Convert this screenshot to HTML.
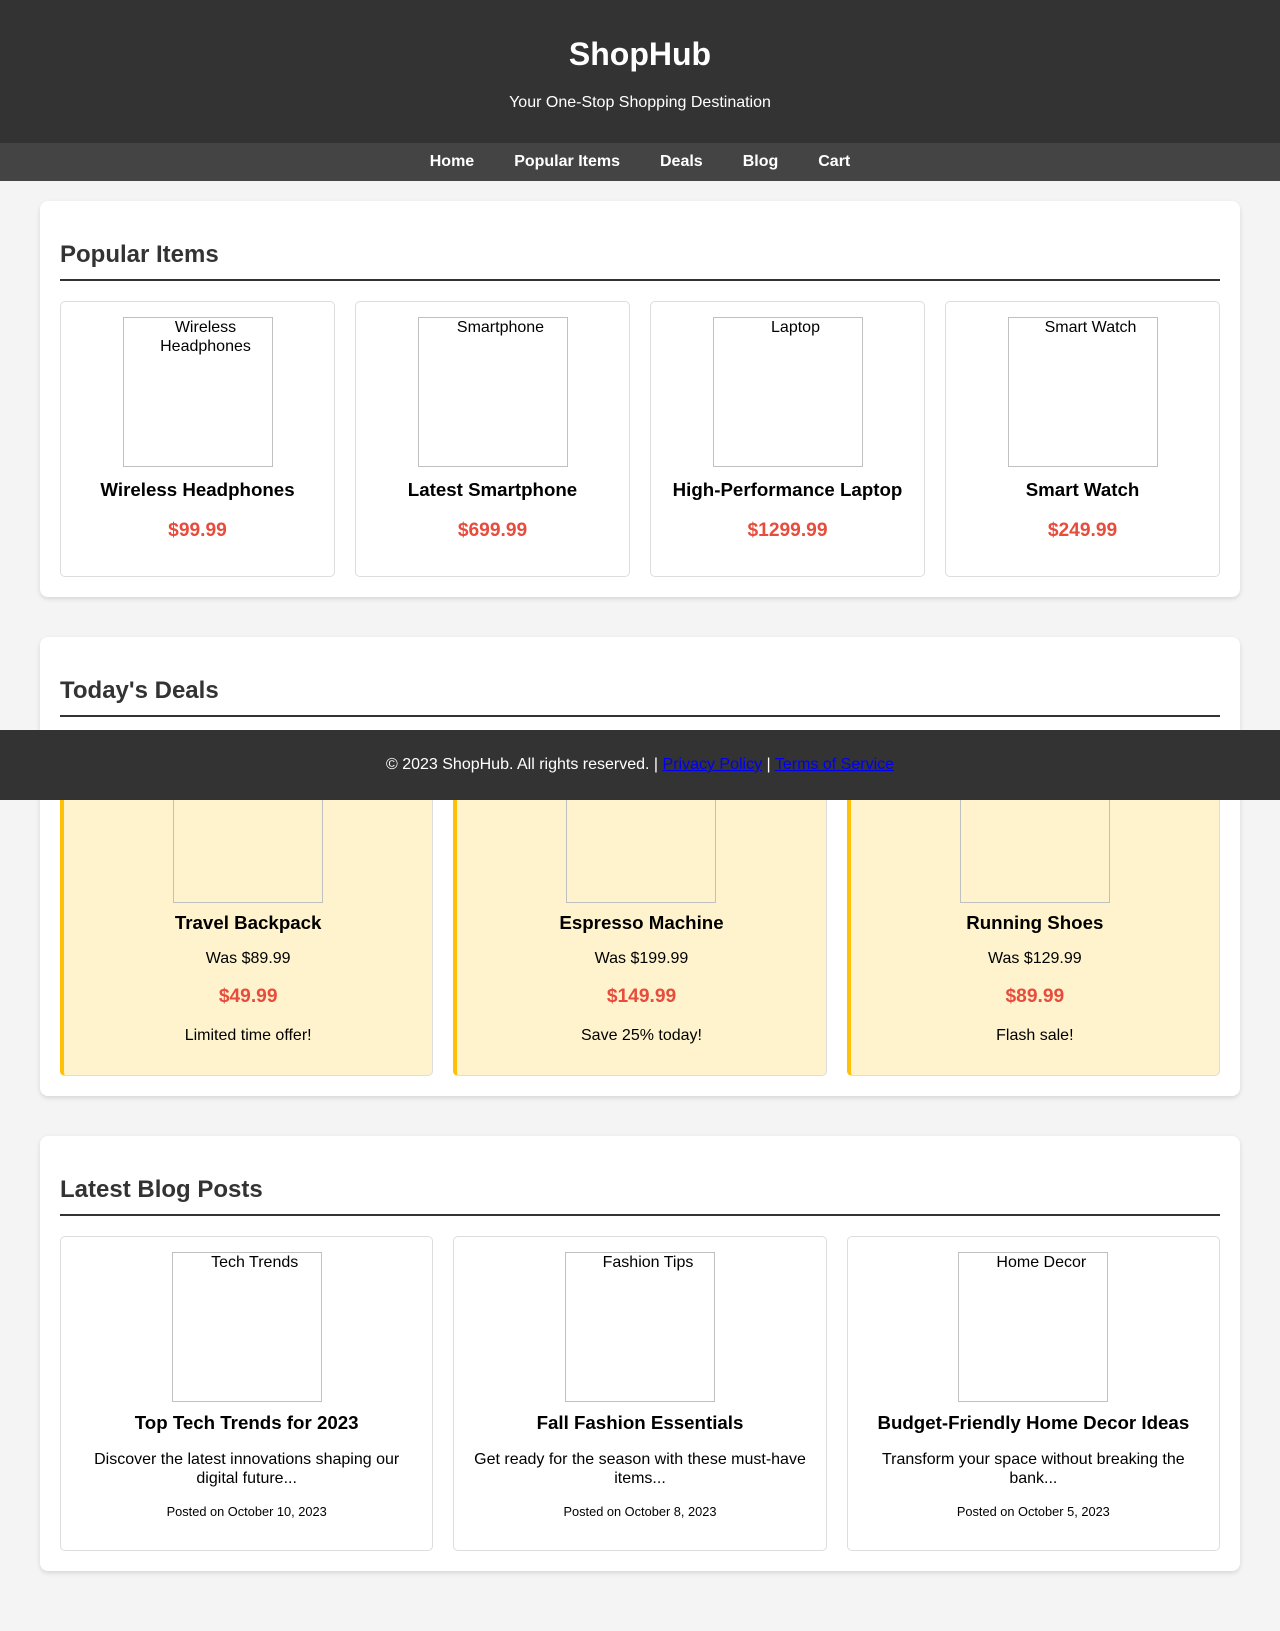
<!DOCTYPE html>
<html><head><meta charset="utf-8"><style>
html,body{height:1631px;overflow:hidden}
body{margin:0;font-family:"Liberation Sans",Arial,sans-serif;background:#f4f4f4;color:#000;position:relative}
header{background:#333;color:#fff;padding:16px;text-align:center}
header h1{font-size:2em;margin:20px 0 21px}
header p{margin:16px 0 15px}
nav{background:#444;text-align:center;height:38px;line-height:38px}
nav a{color:#fff;font-weight:bold;text-decoration:none;margin:0 20px}
main{padding:20px 40px 0}
section{background:#fff;padding:20px;border-radius:8px;box-shadow:0 2px 5px rgba(0,0,0,.12);margin-bottom:40px}
section:last-child{margin-bottom:0}
h2{color:#333;font-size:1.5em;margin:20px 0 20px;padding-bottom:10px;border-bottom:2px solid #333;line-height:28px}
.grid{display:grid;gap:20px}
.g4{grid-template-columns:repeat(4,1fr)}
.g3{grid-template-columns:repeat(3,1fr)}
.card{border:1px solid #ddd;border-radius:5px;padding:15px;text-align:center}
.img{height:148px;border:1px solid #c0c0c0;margin:0 auto 4px;font-size:16px;line-height:19px;box-sizing:content-box;padding:0 4px 0 20px;width:124px}
.card h3{font-size:1.17em;margin:11px 0 10px;line-height:23px}
.card p{margin:16px 0;line-height:19px}
.card p.price{color:#e74c3c;font-weight:bold;font-size:1.2em;margin:19px 0;line-height:22px}
.deal{background:#fff3cd;border-left:4px solid #ffc107}
.deal h3{margin-top:8px!important}
.deal p{margin:15px 0!important}
.deal p.price{margin:18px 0!important}
.blog h3{margin-top:9px!important}
.card p.date{font-size:.8em;line-height:16px;margin:15px 0}
footer{position:absolute;top:730px;left:0;right:0;height:70px;line-height:70px;background:#333;color:#fff;text-align:center}
footer a{color:#00e}
</style></head><body>
<header><h1>ShopHub</h1><p>Your One-Stop Shopping Destination</p></header>
<nav><a>Home</a><a>Popular Items</a><a>Deals</a><a>Blog</a><a>Cart</a></nav>
<main>
<section><h2>Popular Items</h2><div class="grid g4">
<div class="card"><div class="img">Wireless Headphones</div><h3>Wireless Headphones</h3><p class="price">$99.99</p></div>
<div class="card"><div class="img">Smartphone</div><h3>Latest Smartphone</h3><p class="price">$699.99</p></div>
<div class="card"><div class="img">Laptop</div><h3>High-Performance Laptop</h3><p class="price">$1299.99</p></div>
<div class="card"><div class="img">Smart Watch</div><h3>Smart Watch</h3><p class="price">$249.99</p></div>
</div></section>
<section><h2>Today's Deals</h2><div class="grid g3">
<div class="card deal"><div class="img">Travel Backpack</div><h3>Travel Backpack</h3><p>Was $89.99</p><p class="price">$49.99</p><p>Limited time offer!</p></div>
<div class="card deal"><div class="img">Espresso Machine</div><h3>Espresso Machine</h3><p>Was $199.99</p><p class="price">$149.99</p><p>Save 25% today!</p></div>
<div class="card deal"><div class="img">Running Shoes</div><h3>Running Shoes</h3><p>Was $129.99</p><p class="price">$89.99</p><p>Flash sale!</p></div>
</div></section>
<section><h2>Latest Blog Posts</h2><div class="grid g3">
<div class="card blog"><div class="img">Tech Trends</div><h3>Top Tech Trends for 2023</h3><p>Discover the latest innovations shaping our digital future...</p><p class="date">Posted on October 10, 2023</p></div>
<div class="card blog"><div class="img">Fashion Tips</div><h3>Fall Fashion Essentials</h3><p>Get ready for the season with these must-have items...</p><p class="date">Posted on October 8, 2023</p></div>
<div class="card blog"><div class="img">Home Decor</div><h3>Budget-Friendly Home Decor Ideas</h3><p>Transform your space without breaking the bank...</p><p class="date">Posted on October 5, 2023</p></div>
</div></section>
</main>
<footer>© 2023 ShopHub. All rights reserved. | <a href="#">Privacy Policy</a> | <a href="#">Terms of Service</a></footer>
</body></html>
